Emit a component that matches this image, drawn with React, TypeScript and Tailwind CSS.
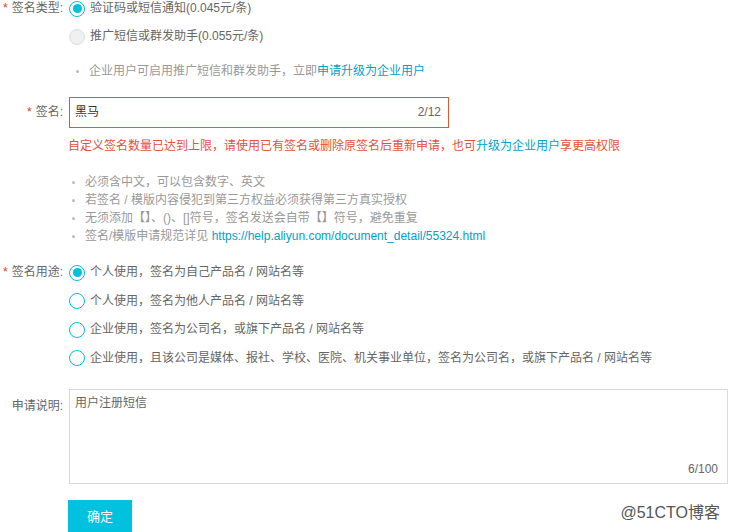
import React from "react";

const font = { fontFamily: '"Liberation Sans", "Noto Sans CJK SC", sans-serif' };

function Radio({ checked, disabled }: { checked?: boolean; disabled?: boolean }) {
  if (disabled) {
    return <span className="inline-block w-[16px] h-[16px] rounded-full border border-[#ddd] bg-[#f0f0f0] shrink-0" />;
  }
  return (
    <span className="inline-flex items-center justify-center w-[16px] h-[16px] rounded-full border border-[#00c1de] bg-white shrink-0">
      {checked && <span className="w-[9px] h-[9px] rounded-full bg-[#00c1de]" />}
    </span>
  );
}

function Label({ text, required, className = "" }: { text: string; required?: boolean; className?: string }) {
  return (
    <div className={"w-[63px] shrink-0 text-right text-[#666] whitespace-nowrap " + className}>
      {required && <span className="text-[#e4322b] mr-[4px]">*</span>}
      {text}
    </div>
  );
}

function Option({ text, checked, disabled }: { text: string; checked?: boolean; disabled?: boolean }) {
  return (
    <div className="flex items-center h-[17px] gap-[5px]">
      <Radio checked={checked} disabled={disabled} />
      <span className="text-[#666] whitespace-nowrap">{text}</span>
    </div>
  );
}

function Bullet({ children }: { children: React.ReactNode }) {
  return (
    <li className="flex items-center h-[18px] whitespace-nowrap">
      <span className="w-[3px] h-[3px] rounded-full bg-[#bbb] ml-[7px] mr-[10px]" />
      <span>{children}</span>
    </li>
  );
}

export default function App() {
  return (
    <div className="relative w-[729px] h-[532px] overflow-hidden bg-white text-[12px] leading-[17px]" style={font}>
      {/* 签名类型 */}
      <div className="flex">
        <Label text="签名类型:" required />
        <div className="ml-[6px] flex flex-col">
          <Option text="验证码或短信通知(0.045元/条)" checked />
          <div className="mt-[11px]">
            <Option text="推广短信或群发助手(0.055元/条)" disabled />
          </div>
          <ul className="mt-[17px] text-[#999]">
            <Bullet>
              企业用户可启用推广短信和群发助手，立即<span className="text-[#00a2ca]">申请升级为企业用户</span>
            </Bullet>
          </ul>
        </div>
      </div>

      {/* 签名 */}
      <div className="flex mt-[17px]">
        <Label text="签名:" required className="leading-[31px]" />
        <div className="ml-[6px] flex flex-col">
          <div className="w-[380px] h-[31px] border border-[#e0592e] flex items-center justify-between px-[5px]">
            <span className="text-[#333]">黑马</span>
            <span className="text-[#666] mr-[2px]">2/12</span>
          </div>
          <div className="mt-[10px] text-[#e4503a] whitespace-nowrap -ml-[1px]">
            自定义签名数量已达到上限，请使用已有签名或删除原签名后重新申请，也可<span className="text-[#00a2ca]">升级为企业用户</span>享更高权限
          </div>
          <ul className="mt-[18px] text-[#999] -ml-[4px]">
            <Bullet>必须含中文，可以包含数字、英文</Bullet>
            <Bullet>若签名 / 模版内容侵犯到第三方权益必须获得第三方真实授权</Bullet>
            <Bullet>无须添加【】、()、[]符号，签名发送会自带【】符号，避免重复</Bullet>
            <Bullet>
              签名/模版申请规范详见 <span className="text-[#00a2ca]">https://help.aliyun.com/document_detail/55324.html</span>
            </Bullet>
          </ul>
        </div>
      </div>

      {/* 签名用途 */}
      <div className="flex mt-[19px]">
        <Label text="签名用途:" required />
        <div className="ml-[6px] flex flex-col gap-[11.5px]">
          <Option text="个人使用，签名为自己产品名 / 网站名等" checked />
          <Option text="个人使用，签名为他人产品名 / 网站名等" />
          <Option text="企业使用，签名为公司名，或旗下产品名 / 网站名等" />
          <Option text="企业使用，且该公司是媒体、报社、学校、医院、机关事业单位，签名为公司名，或旗下产品名 / 网站名等" />
        </div>
      </div>

      {/* 申请说明 */}
      <div className="flex mt-[22px]">
        <Label text="申请说明:" className="pt-[9px]" />
        <div className="ml-[6px] w-[659px] h-[95px] border border-[#d9d9d9] flex flex-col justify-between px-[5px] pt-[5px] pb-[5px]">
          <span className="text-[#666]">用户注册短信</span>
          <span className="self-end text-[#666] mr-[4px]">6/100</span>
        </div>
      </div>

      {/* 确定 */}
      <div className="flex mt-[16px]">
        <div className="w-[63px] shrink-0" />
        <button className="ml-[5px] w-[64px] h-[34px] bg-[#00c1de] text-white text-[13px]">确定</button>
      </div>

      <div className="absolute right-[9px] bottom-[9px] text-[16px] leading-[20px] text-[#555]">@51CTO博客</div>
    </div>
  );
}
